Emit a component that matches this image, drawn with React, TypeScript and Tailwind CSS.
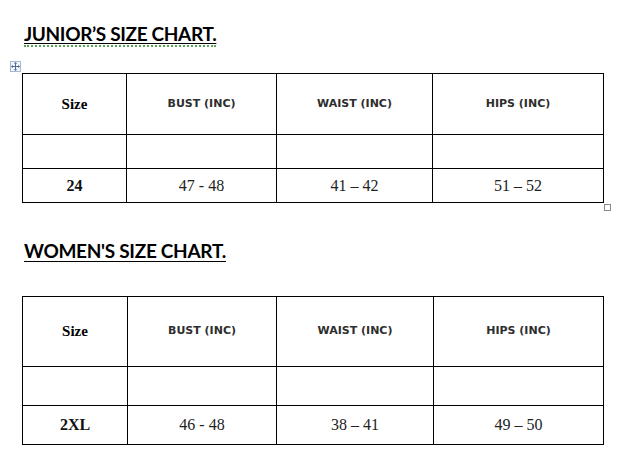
import React from "react";

type Row = { size: string; bust: string; waist: string; hips: string };

const titleFont = { fontFamily: "Lato, 'Open Sans', sans-serif" };

function Grid({
  cols,
  rows,
  data,
}: {
  cols: string;
  rows: string[];
  data: Row;
}) {
  const headCls =
    "flex items-center justify-center border-r border-b border-black font-['DejaVu_Sans',sans-serif] font-bold text-[11px] text-[#2e2e2e]";
  const sizeHead =
    "flex items-center justify-center border-r border-b border-black font-['Liberation_Serif',serif] font-bold text-[15px] text-black";
  const cell = "border-r border-b border-black";
  const dataCls =
    "flex items-center justify-center border-r border-b border-black font-['Liberation_Serif',serif] text-[16px] text-[#222222]";
  const dataBold =
    "flex items-center justify-center border-r border-b border-black font-['Liberation_Serif',serif] font-bold text-[16px] text-[#111111]";
  return (
    <div className={`grid ${cols} border-l border-t border-black w-[582px]`}>
      <div className={`${sizeHead} ${rows[0]}`}>Size</div>
      <div className={`${headCls} ${rows[0]}`}>BUST (INC)</div>
      <div className={`${headCls} ${rows[0]}`}>WAIST (INC)</div>
      <div className={`${headCls} ${rows[0]}`}>HIPS (INC)</div>
      <div className={`${cell} ${rows[1]}`} />
      <div className={`${cell} ${rows[1]}`} />
      <div className={`${cell} ${rows[1]}`} />
      <div className={`${cell} ${rows[1]}`} />
      <div className={`${dataBold} ${rows[2]}`}>{data.size}</div>
      <div className={`${dataCls} ${rows[2]}`}>{data.bust}</div>
      <div className={`${dataCls} ${rows[2]}`}>{data.waist}</div>
      <div className={`${dataCls} ${rows[2]}`}>{data.hips}</div>
    </div>
  );
}

export default function App() {
  return (
    <div className="w-[620px] h-[468px] bg-white overflow-hidden pt-[20px]">
      <div className="pl-[24px] h-[30px] leading-[30px]">
        <span
          className="inline-block leading-[21px] border-b-2 border-dotted border-[#5aa55a]"
          style={titleFont}
        >
          <span className="font-bold text-[19px] tracking-[-0.35px] text-black underline underline-offset-[2px] decoration-1">
            JUNIOR’S SIZE CHART.
          </span>
        </span>
      </div>

      <div className="relative ml-[22px] mt-[23px] w-[582px]">
        <div className="absolute left-[-12px] top-[-12px] w-[11px] h-[11px] border border-[#a9b8cc] bg-[#f4f7fb] flex items-center justify-center">
          <svg width="9" height="9" viewBox="0 0 9 9" fill="#4a6a9a">
            <rect x="4" y="1.5" width="1" height="6" />
            <rect x="1.5" y="4" width="6" height="1" />
            <path d="M4.5 0 L6.3 1.8 L2.7 1.8 Z" />
            <path d="M4.5 9 L6.3 7.2 L2.7 7.2 Z" />
            <path d="M0 4.5 L1.8 2.7 L1.8 6.3 Z" />
            <path d="M9 4.5 L7.2 2.7 L7.2 6.3 Z" />
          </svg>
        </div>
        <Grid
          cols="grid-cols-[104px_150px_156px_171px]"
          rows={["h-[61px]", "h-[34px]", "h-[34px]"]}
          data={{ size: "24", bust: "47 - 48", waist: "41 – 42", hips: "51 – 52" }}
        />
        <div className="absolute right-[-7px] bottom-[-8px] w-[7px] h-[7px] border border-[#8a8a8a] bg-white" />
      </div>

      <div className="pl-[24px] mt-[33px] h-[30px] leading-[30px]">
        <span
          className="font-bold text-[19px] tracking-[-0.3px] text-black underline underline-offset-[3px] decoration-1"
          style={titleFont}
        >
          WOMEN'S SIZE CHART.
        </span>
      </div>

      <div className="ml-[22px] mt-[30px]">
        <Grid
          cols="grid-cols-[105px_149px_157px_170px]"
          rows={["h-[70px]", "h-[39px]", "h-[39px]"]}
          data={{ size: "2XL", bust: "46 - 48", waist: "38 – 41", hips: "49 – 50" }}
        />
      </div>
    </div>
  );
}
